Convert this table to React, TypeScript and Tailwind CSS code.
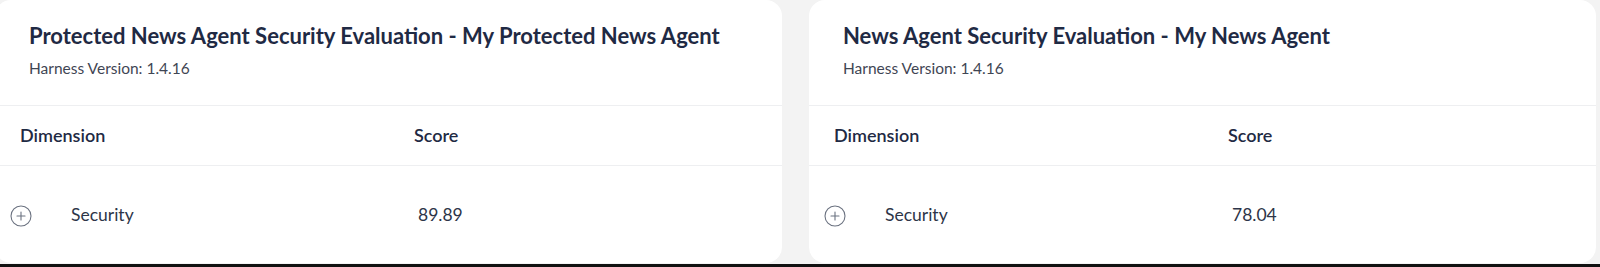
import { CirclePlus } from "lucide-react";

type Evaluation = {
  title: string;
  version: string;
  dimension: string;
  score: string;
};

const evaluations: Evaluation[] = [
  {
    title: "Protected News Agent Security Evaluation - My Protected News Agent",
    version: "1.4.16",
    dimension: "Security",
    score: "89.89",
  },
  {
    title: "News Agent Security Evaluation - My News Agent",
    version: "1.4.16",
    dimension: "Security",
    score: "78.04",
  },
];

function EvaluationCard({ title, version, dimension, score }: Evaluation) {
  return (
    <div className="w-[787px] shrink-0 h-[263px] bg-white rounded-2xl flex flex-col overflow-hidden">
      <div className="h-[106px] px-[34px] pt-[21px] border-b border-[#eeeff1]">
        <h3 className="text-[22px] leading-[30px] font-bold text-[#1f2a44]">{title}</h3>
        <p className="mt-[7px] text-[15.5px] leading-[20px] text-[#3f4654]">
          Harness Version: {version}
        </p>
      </div>
      <div className="h-[60px] flex items-center border-b border-[#eeeff1] text-[18px] font-semibold text-[#1f2a44]">
        <div className="w-[419px] pl-[25px]">Dimension</div>
        <div>Score</div>
      </div>
      <div className="flex-1 flex items-center pt-[2px] text-[17.5px] text-[#2d3548]">
        <div className="w-[423px] flex items-center">
          <div className="w-[76px] pl-[14px]">
            <CirclePlus className="w-[24px] h-[24px] text-[#6b7280]" strokeWidth={1.1} />
          </div>
          <span>{dimension}</span>
        </div>
        <div>{score}</div>
      </div>
    </div>
  );
}

export default function App() {
  return (
    <div className="w-[1600px] h-[267px] bg-[#f3f3f3] flex flex-col" style={{ fontFamily: "Lato, 'Noto Sans', sans-serif" }}>
      <div className="h-[264px] flex gap-[27px] -ml-[5px]">
        {evaluations.map((e) => (
          <EvaluationCard key={e.title} {...e} />
        ))}
      </div>
      <div className="h-[3px] bg-[#111111]" />
    </div>
  );
}
